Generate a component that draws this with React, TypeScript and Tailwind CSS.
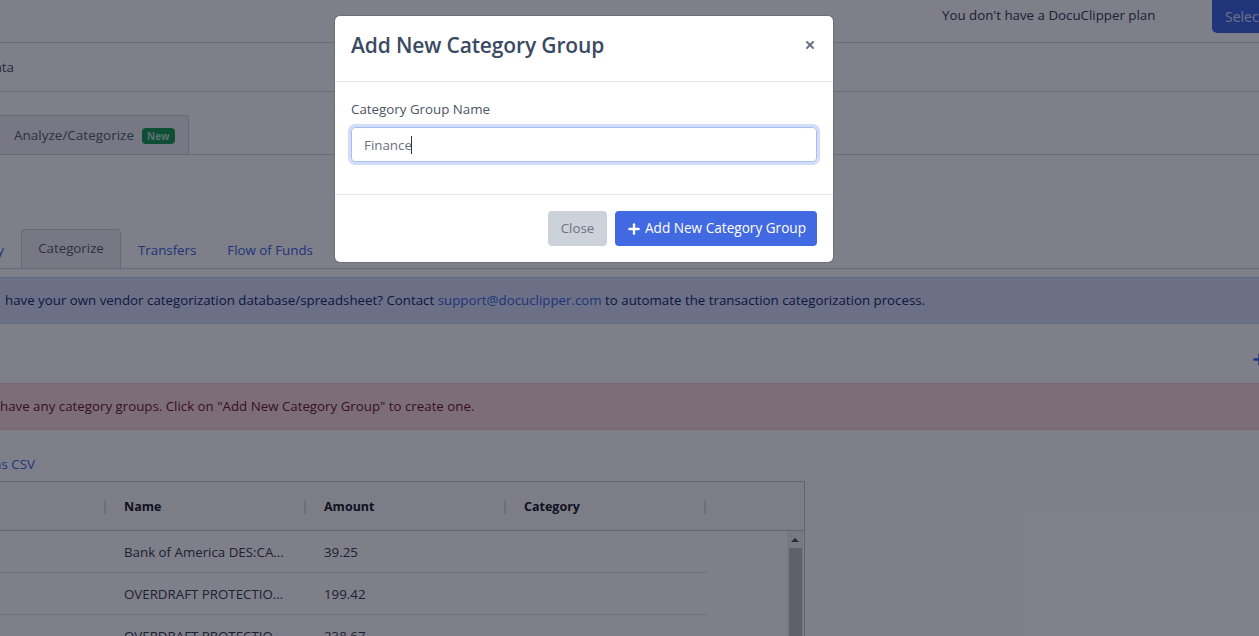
import { Plus, X } from "lucide-react";

const rows = [
  { name: "Bank of America DES:CA...", amount: "39.25" },
  { name: "OVERDRAFT PROTECTIO...", amount: "199.42" },
  { name: "OVERDRAFT PROTECTIO...", amount: "238.67" },
];

function HeaderCell({ label }: { label: string }) {
  return (
    <div className="w-[200px] h-full shrink-0 flex items-center justify-between pl-[18px]">
      <span className="font-bold text-[12.5px] text-[#212529]">{label}</span>
      <span className="w-[2px] h-[14px] bg-[#d8dce3]" />
    </div>
  );
}

function Page() {
  return (
    <div className="w-[1400px] -ml-[100px] text-[13.3px] text-[#5a6270]">
      {/* top bar */}
      <div className="h-[43px] border-b border-[#cfd2d8] flex items-start pl-[1042px]">
        <span className="mt-[6px] w-[270px] shrink-0 text-[#3a3f52]">You don't have a DocuClipper plan</span>
        <button className="h-[33px] w-[120px] shrink-0 bg-[#4169e1] rounded-bl-[5px] text-left pl-[13px] text-white/80 text-[14px]">
          Select Plan
        </button>
      </div>
      {/* sub header */}
      <div className="h-[49px] border-b border-[#d6d8dd] flex items-center pt-[2px]">
        <span className="w-[114px] text-right text-[#4f5563]">Data</span>
      </div>
      {/* main tabs */}
      <div className="mt-[24px] h-[39px] border-b border-[#cfd2d8] flex items-end">
        <div className="h-[39px] w-[289px] bg-[#f0f1f4] border border-b-0 border-[#cfd2d8] rounded-t-[4px] flex items-center pl-[113px] gap-[8px] pt-[1px]">
          <span className="text-[13.5px]">Analyze/Categorize</span>
          <span className="bg-[#1c9d57] text-white/70 rounded-[4px] px-[5px] h-[16px] leading-[16px] text-[10px] font-bold">New</span>
        </div>
      </div>
      {/* sub tabs */}
      <div className="mt-[75px] h-[39px] border-b border-[#cfd2d8] flex items-end text-[#4169e1]">
        <span className="w-[104px] h-[38px] leading-[40px] text-right">y</span>
        <div className="ml-[17px] w-[100px] h-[39px] bg-[#f0f1f4] border border-b-0 border-[#cfd2d8] rounded-t-[4px] flex items-center justify-center text-[#5a6270]">
          Categorize
        </div>
        <span className="ml-[17px] h-[38px] leading-[40px]">Transfers</span>
        <span className="ml-[31px] h-[38px] leading-[40px]">Flow of Funds</span>
      </div>
      {/* info alert */}
      <div className="mt-[8px] h-[47px] bg-[#d6e0f9] border-y border-[#c6d2f5] flex items-center pl-[105px] pt-[1px] text-[#1f2f6b]">
        <span>
          have your own vendor categorization database/spreadsheet? Contact{" "}
          <span className="text-[#4169e1]">support@docuclipper.com</span> to automate the transaction categorization process.
        </span>
      </div>
      {/* add group row */}
      <div className="h-[59px] flex items-center justify-end pr-[32px] pt-[11px]">
        <Plus className="w-[17px] h-[17px] text-[#4169e1]" strokeWidth={3.5} />
      </div>
      {/* danger alert */}
      <div className="h-[47px] bg-[#fadbdf] border-y border-[#f8ccd2] flex items-center pl-[100px] pt-[1px] text-[#6f1f2c]">
        have any category groups. Click on "Add New Category Group" to create one.
      </div>
      {/* export link */}
      <div className="mt-[24px] h-[20px] leading-[20px] pl-[50px] text-[#4169e1]">
        Export as CSV
      </div>
      {/* table */}
      <div className="mt-[7px] ml-[5px] w-[900px] h-[200px] border border-[#c4c6cc]">
        <div className="h-[49px] border-b border-[#c4c6cc] flex items-center bg-[#fafafa] pt-[2px]">
          <HeaderCell label="" />
          <HeaderCell label="Name" />
          <HeaderCell label="Amount" />
          <HeaderCell label="Category" />
        </div>
        {rows.map((r, i) => (
          <div key={i} className="w-[801px] h-[42px] border-b border-[#dfe1e5] flex items-center pt-[3px] text-[#3d4250]">
            <span className="w-[200px]" />
            <span className="w-[200px] pl-[18px]">{r.name}</span>
            <span className="pl-[18px]">{r.amount}</span>
          </div>
        ))}
      </div>
    </div>
  );
}

export default function App() {
  return (
    <div className="relative w-[1259px] h-[636px] overflow-hidden bg-white font-['Open_Sans','Liberation_Sans',sans-serif]">
      <Page />
      {/* scrollbar of the table */}
      <div className="absolute left-[787px] top-[531px] w-[16px] h-[105px] bg-[#f1f1f1]">
        <div className="mx-auto mt-[7px] w-0 h-0 border-x-[4px] border-x-transparent border-b-[4px] border-b-[#505050]" />
        <div className="ml-[2px] mt-[6px] w-[13px] h-[90px] bg-[#c1c1c1]" />
      </div>
      {/* backdrop */}
      <div className="absolute inset-0 bg-[#000014]/50" />
      {/* modal */}
      <div className="absolute left-[335px] top-[16px] w-[498px] h-[246px] bg-white rounded-[5px] shadow-[0_0_0_1px_#6d6e7a] flex flex-col">
        <div className="h-[66px] border-b border-[#e3e6f0] flex items-center justify-between pl-[16px] pr-[17px]">
          <h5 className="-mt-[5px] text-[21px] tracking-[-0.14px] text-[#3a4a63] font-semibold">Add New Category Group</h5>
          <X className="w-[12px] h-[12px] text-[#6b7280] -mt-[8px]" strokeWidth={4} />
        </div>
        <div className="h-[113px] border-b border-[#e3e6f0] px-[16px] pt-[17px]">
          <label className="block text-[13.33px] leading-[20px] text-[#4b5563]">Category Group Name</label>
          <div className="relative mt-[8px]">
            <input
              readOnly
              value="Finance"
              className="w-full h-[35px] rounded-[4px] border border-[#a9bdf0] shadow-[0_0_0_3px_#d3ddf8] pl-[12px] text-[13.33px] text-[#6b7280] outline-none"
            />
            <span className="absolute left-[60px] top-[9px] w-px h-[18px] bg-[#333]" />
          </div>
        </div>
        <div className="flex-1 flex items-center justify-end gap-[8px] px-[16px]">
          <button className="w-[59px] h-[35px] bg-[#cdd1d9] rounded-[4px] text-[13.33px] text-[#6b7280]">Close</button>
          <button className="w-[202px] h-[35px] bg-[#4169e1] rounded-[4px] text-[13.6px] text-white flex items-center justify-center gap-[3px]">
            <Plus className="w-[16px] h-[16px]" strokeWidth={3.5} />
            Add New Category Group
          </button>
        </div>
      </div>
    </div>
  );
}
